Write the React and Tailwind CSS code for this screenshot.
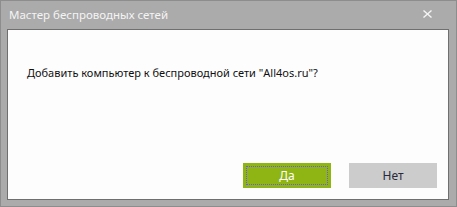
export default function App() {
  const font = { fontFamily: '"Noto Sans", "Open Sans", sans-serif' };
  return (
    <div className="w-[457px] h-[207px] bg-[#ababab] border border-[#8d8d8d] flex flex-col" style={font}>
      <div className="h-[28px] flex items-center justify-between pl-[8px] pr-[24px] shrink-0">
        <span className="text-[11.5px] text-[#f4f4f4] leading-none">Мастер беспроводных сетей</span>
        <svg width="9" height="8" viewBox="0 0 9 8" className="mt-[-3px]">
          <path d="M0.5 0.5 L8.5 7.5 M8.5 0.5 L0.5 7.5" stroke="#f4f4f4" strokeWidth="1.4" />
        </svg>
      </div>
      <div className="ml-[6px] mr-[7px] mb-[6px] flex-1 border border-[#6f6f6f] bg-[#fdfdfd] flex flex-col">
        <p className="pl-[19px] pt-[35px] text-[11px] text-[#111] leading-[16px]">
          Добавить компьютер к беспроводной сети "All4os.ru"?
        </p>
        <div className="mt-auto flex justify-end gap-[18px] pr-[11px] pb-[11px]">
          <button className="w-[88px] h-[25px] bg-[#8fb514] p-[3px]">
            <span className="w-full h-full flex items-center justify-center border border-dotted border-[#6a55ff] text-[12px] text-white leading-none">
              Да
            </span>
          </button>
          <button className="w-[88px] h-[25px] bg-[#cccccc] flex items-center justify-center text-[12px] text-[#2a2a3a] leading-none">
            Нет
          </button>
        </div>
      </div>
    </div>
  );
}
